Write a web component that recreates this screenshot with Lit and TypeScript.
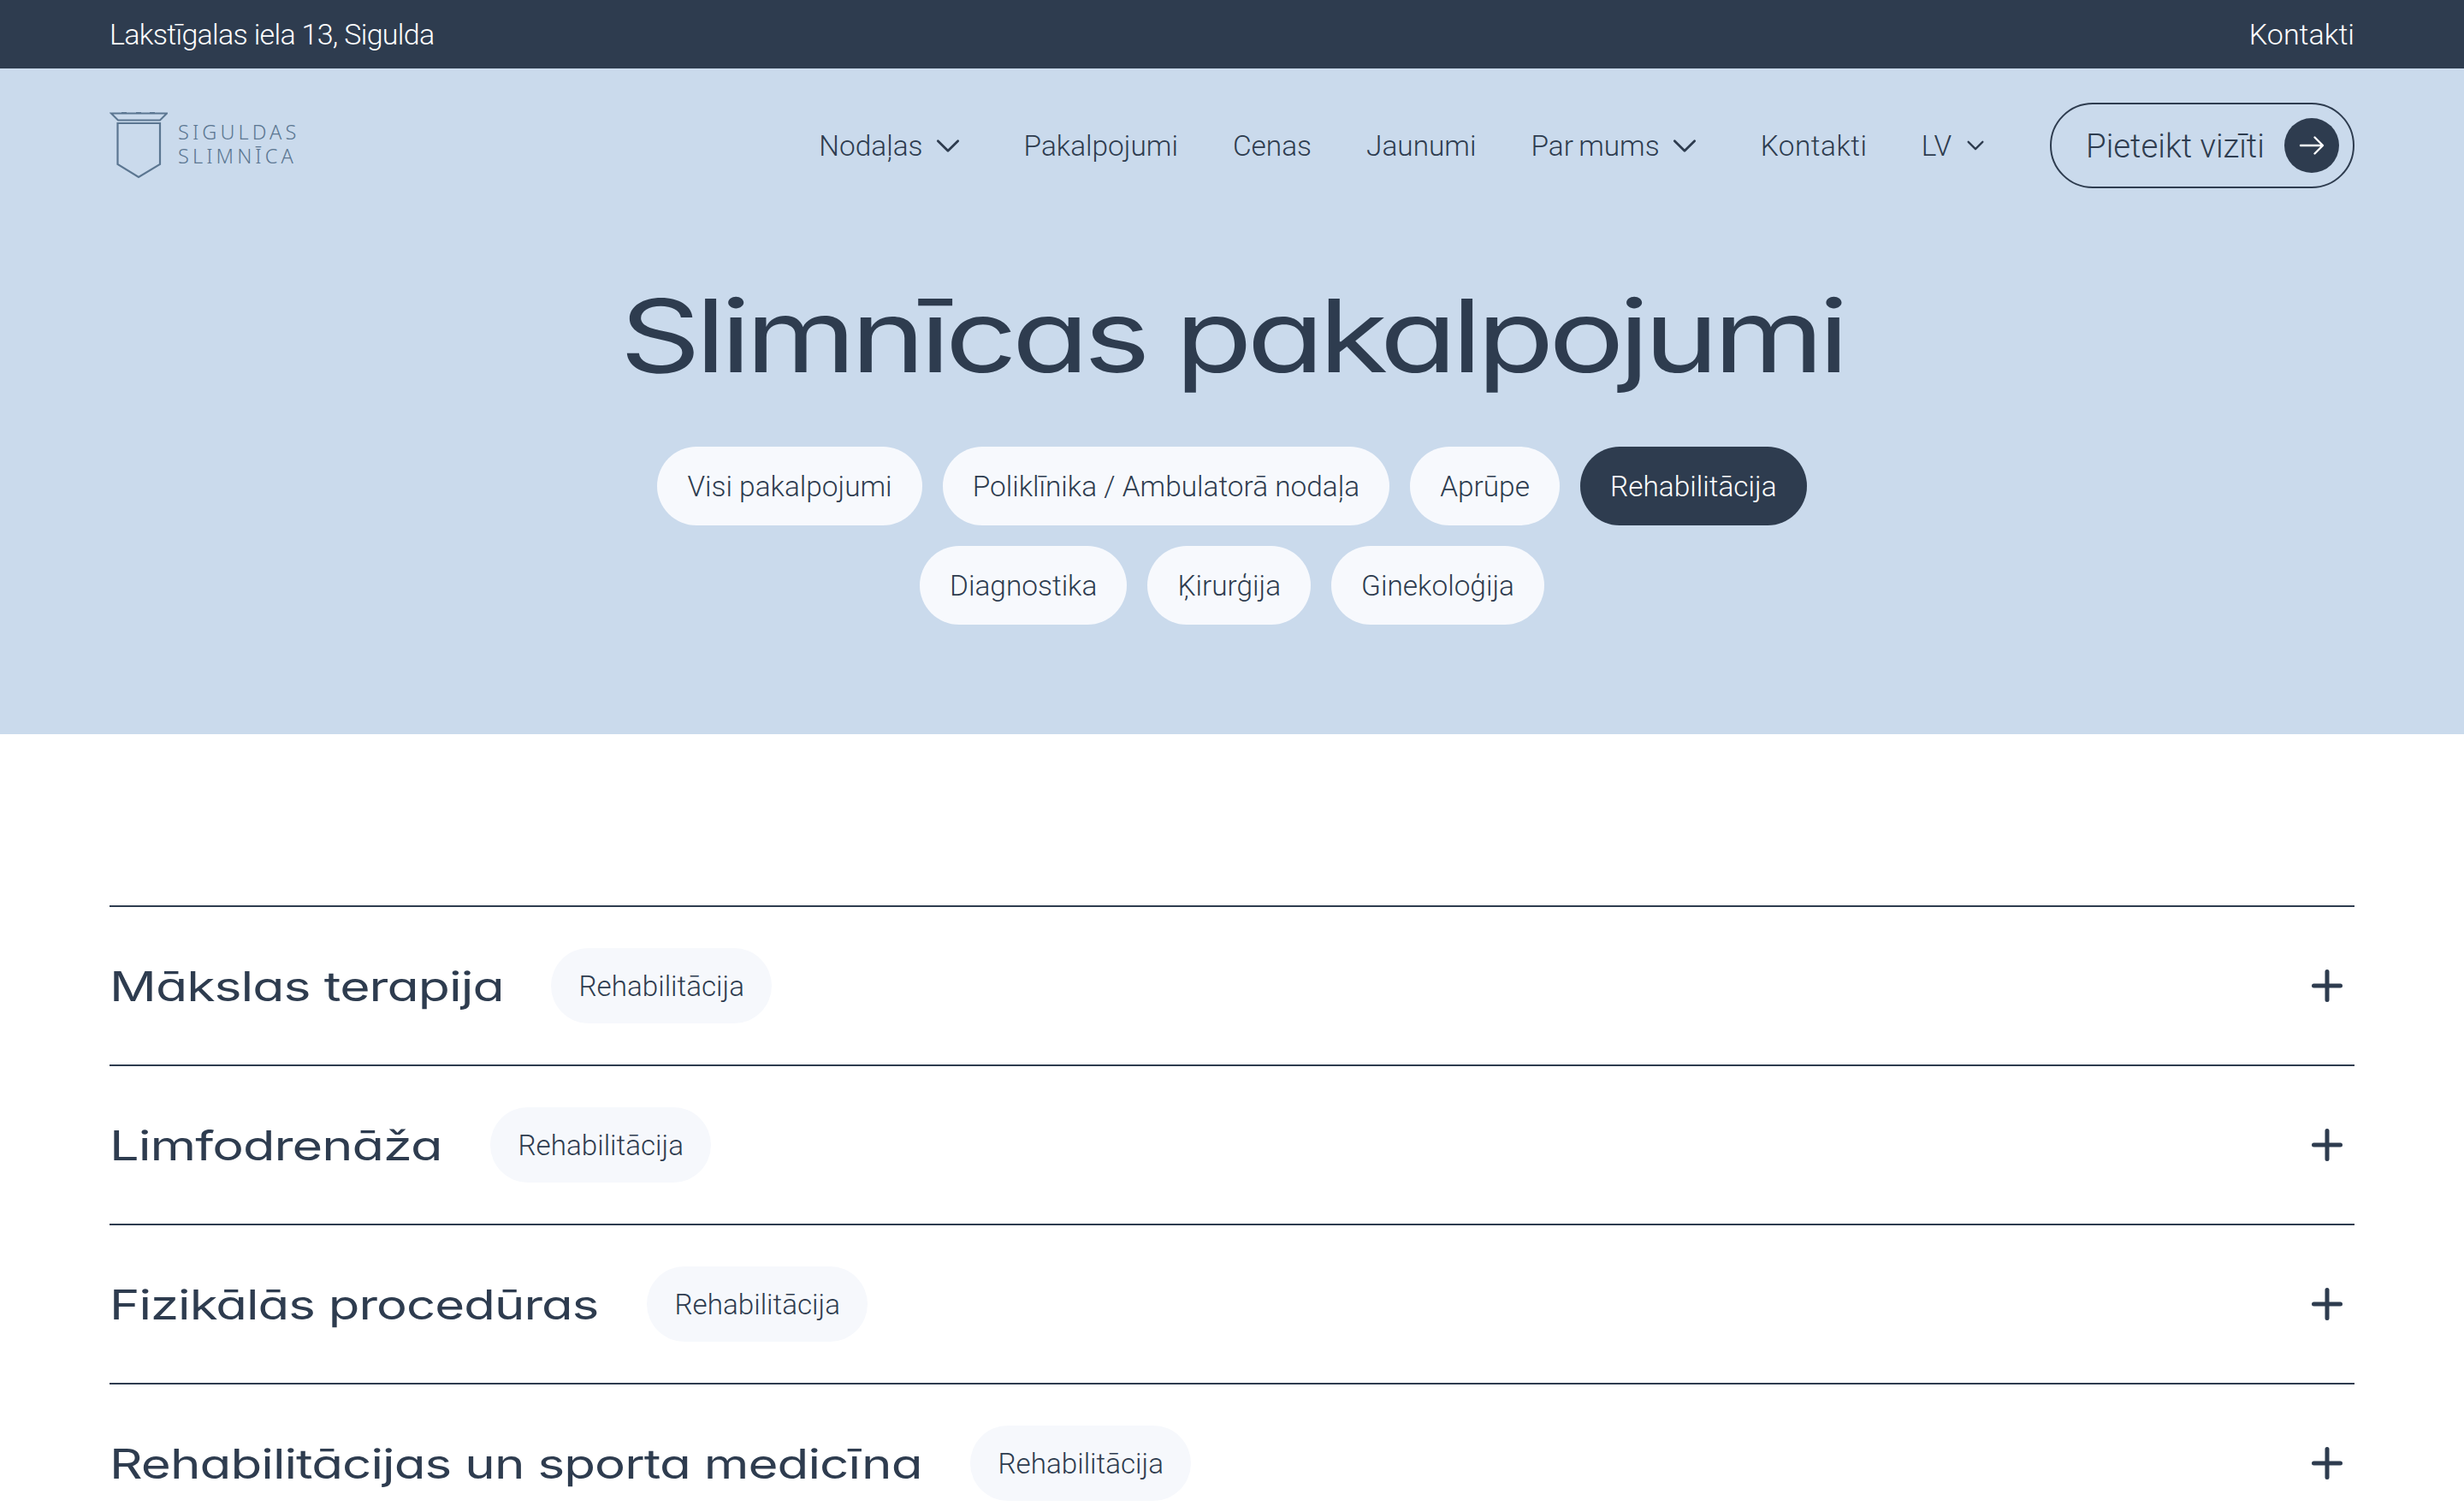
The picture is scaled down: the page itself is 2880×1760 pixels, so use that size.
import { LitElement, html, css } from "lit";
import { customElement } from "lit/decorators.js";

const chev = (w: number, sw: number) => html`<svg class="chev" width=${w} height=${Math.round(w * 0.6)} viewBox="0 0 24 14" fill="none" stroke="currentColor" stroke-width=${sw} stroke-linecap="round" stroke-linejoin="round"><path d="M2 2l10 10L22 2"/></svg>`;

const rows: [string, number, number][] = [
  ["Mākslas terapija", 459, 1.265],
  ["Limfodrenāža", 388, 1.276],
  ["Fizikālās procedūras", 571, 1.247],
  ["Rehabilitācijas un sporta medicīna", 949, 1.252],
];

@customElement("app-root")
export class AppRoot extends LitElement {
  static styles = css`
    :host { display: block; font-family: Roboto, "Liberation Sans", sans-serif; color: #2e3c4f; background: #fff; height: 1760px; overflow: hidden; }
    * { box-sizing: border-box; }
    .top { height: 80px; background: #2e3c4f; color: #fff; display: flex; align-items: center; justify-content: space-between; padding: 0 128px; font-size: 34px; font-weight: 350; }
    .addr { letter-spacing: -0.7px; }
    .hero { height: 778px; background: #cadaec; padding: 40px 128px 0; }
    .nav { display: flex; align-items: center; height: 100px; font-size: 33.4px; font-weight: 350; }
    .logo { display: flex; align-items: center; gap: 12px; color: #5b7691; }
    .logo-text { font-family: "Noto Sans", sans-serif; font-size: 23.5px; line-height: 28px; letter-spacing: 4.1px; margin-top: -4px; }
    .links { margin-left: auto; display: flex; align-items: center; gap: 64px; word-spacing: -2px; }
    .link { display: flex; align-items: center; gap: 15px; }
    .link .chev { margin-right: 11px; }
    .wide { letter-spacing: 0.5px; }
    .lang { gap: 18px; margin-left: -1px; }
    .lang .chev { margin-right: 0; }
    .btn { margin-left: 77px; width: 356px; height: 100px; border: 2px solid #2e3c4f; border-radius: 50px; display: flex; align-items: center; justify-content: space-between; padding: 0 16px 0 40px; font-size: 38.4px; font-weight: 350; }
    .circle { width: 64px; height: 64px; border-radius: 50%; background: #2e3c4f; display: flex; align-items: center; justify-content: center; color: #fff; }
    h1 { margin: 97px 0 0; text-align: center; font-family: Inter, sans-serif; font-feature-settings: "cv11" 1; font-weight: 380; font-size: 118px; line-height: 150px; letter-spacing: -5px; white-space: nowrap; }
    h1 span { display: inline-block; transform: scaleX(1.249); }
    .chips { margin-top: 55px; display: flex; flex-direction: column; gap: 24px; align-items: center; }
    .chip-row { display: flex; gap: 24px; }
    .chip { height: 92px; border-radius: 46px; background: #f7f9fd; display: flex; align-items: center; padding: 0 35px; font-size: 33.4px; font-weight: 350; }
    .chip.on { background: #2e3c4f; color: #fff; }
    .list { padding: 200px 128px 0; }
    .row { height: 186px; border-top: 2px solid #2e3c4f; display: flex; align-items: center; }
    .title { font-family: Inter, sans-serif; font-feature-settings: "cv11" 1; font-size: 48px; font-weight: 380; letter-spacing: -0.75px; white-space: nowrap; }
    .title span { display: inline-block; transform-origin: left center; }
    .tag { margin-left: 57px; height: 88px; border-radius: 44px; background: #f6f8fc; display: flex; align-items: center; padding: 0 32.5px; font-size: 33.2px; font-weight: 350; }
    .plus { margin-left: auto; margin-right: 14px; display: block; }
  `;

  render() {
    const chip = (t: string, on = false) => html`<div class="chip ${on ? "on" : ""}">${t}</div>`;
    return html`
      <div class="top"><span class="addr">Lakstīgalas iela 13, Sigulda</span><span>Kontakti</span></div>
      <div class="hero">
        <nav class="nav">
          <div class="logo">
            <svg width="68" height="78" viewBox="0 0 68 78" fill="none" stroke="currentColor" stroke-width="2"><path d="M2 1.5H67L59 9.5H10z"/><path d="M9.5 13H59V61L34 76 9.5 61z" stroke-width="2.2"/><path d="M14 .8h6M31 .8h6M47 .8h6" stroke-width="1.6"/></svg>
            <div class="logo-text">SIGULDAS<br />SLIMNĪCA</div>
          </div>
          <div class="links">
            <div class="link">Nodaļas ${chev(28, 2.4)}</div>
            <div class="link">Pakalpojumi</div>
            <div class="link">Cenas</div>
            <div class="link">Jaunumi</div>
            <div class="link">Par mums ${chev(28, 2.4)}</div>
            <div class="link wide">Kontakti</div>
            <div class="link lang">LV ${chev(20, 2.8)}</div>
          </div>
          <div class="btn">
            <span>Pieteikt vizīti</span>
            <span class="circle"><svg width="30" height="24" viewBox="0 0 30 24" fill="none" stroke="currentColor" stroke-width="2.4" stroke-linecap="round" stroke-linejoin="round"><path d="M2 12h26M18.500 2.500 28 12l-9.500 9.500"/></svg></span>
          </div>
        </nav>
        <h1><span>Slimnīcas pakalpojumi</span></h1>
        <div class="chips">
          <div class="chip-row">${chip("Visi pakalpojumi")}${chip("Poliklīnika / Ambulatorā nodaļa")}${chip("Aprūpe")}${chip("Rehabilitācija", true)}</div>
          <div class="chip-row">${chip("Diagnostika")}${chip("Ķirurģija")}${chip("Ginekoloģija")}</div>
        </div>
      </div>
      <div class="list">
        ${rows.map(([t, w, s]) => html`<div class="row">
          <div class="title" style="width:${w}px"><span style="transform:scaleX(${s})">${t}</span></div>
          <div class="tag">Rehabilitācija</div>
          <svg class="plus" width="36" height="38" viewBox="0 0 36 38" stroke="#2e3c4f" stroke-width="5" stroke-linecap="round"><path d="M18 2.500v33M2.500 19h31"/></svg>
        </div>`)}
      </div>
    `;
  }
}
